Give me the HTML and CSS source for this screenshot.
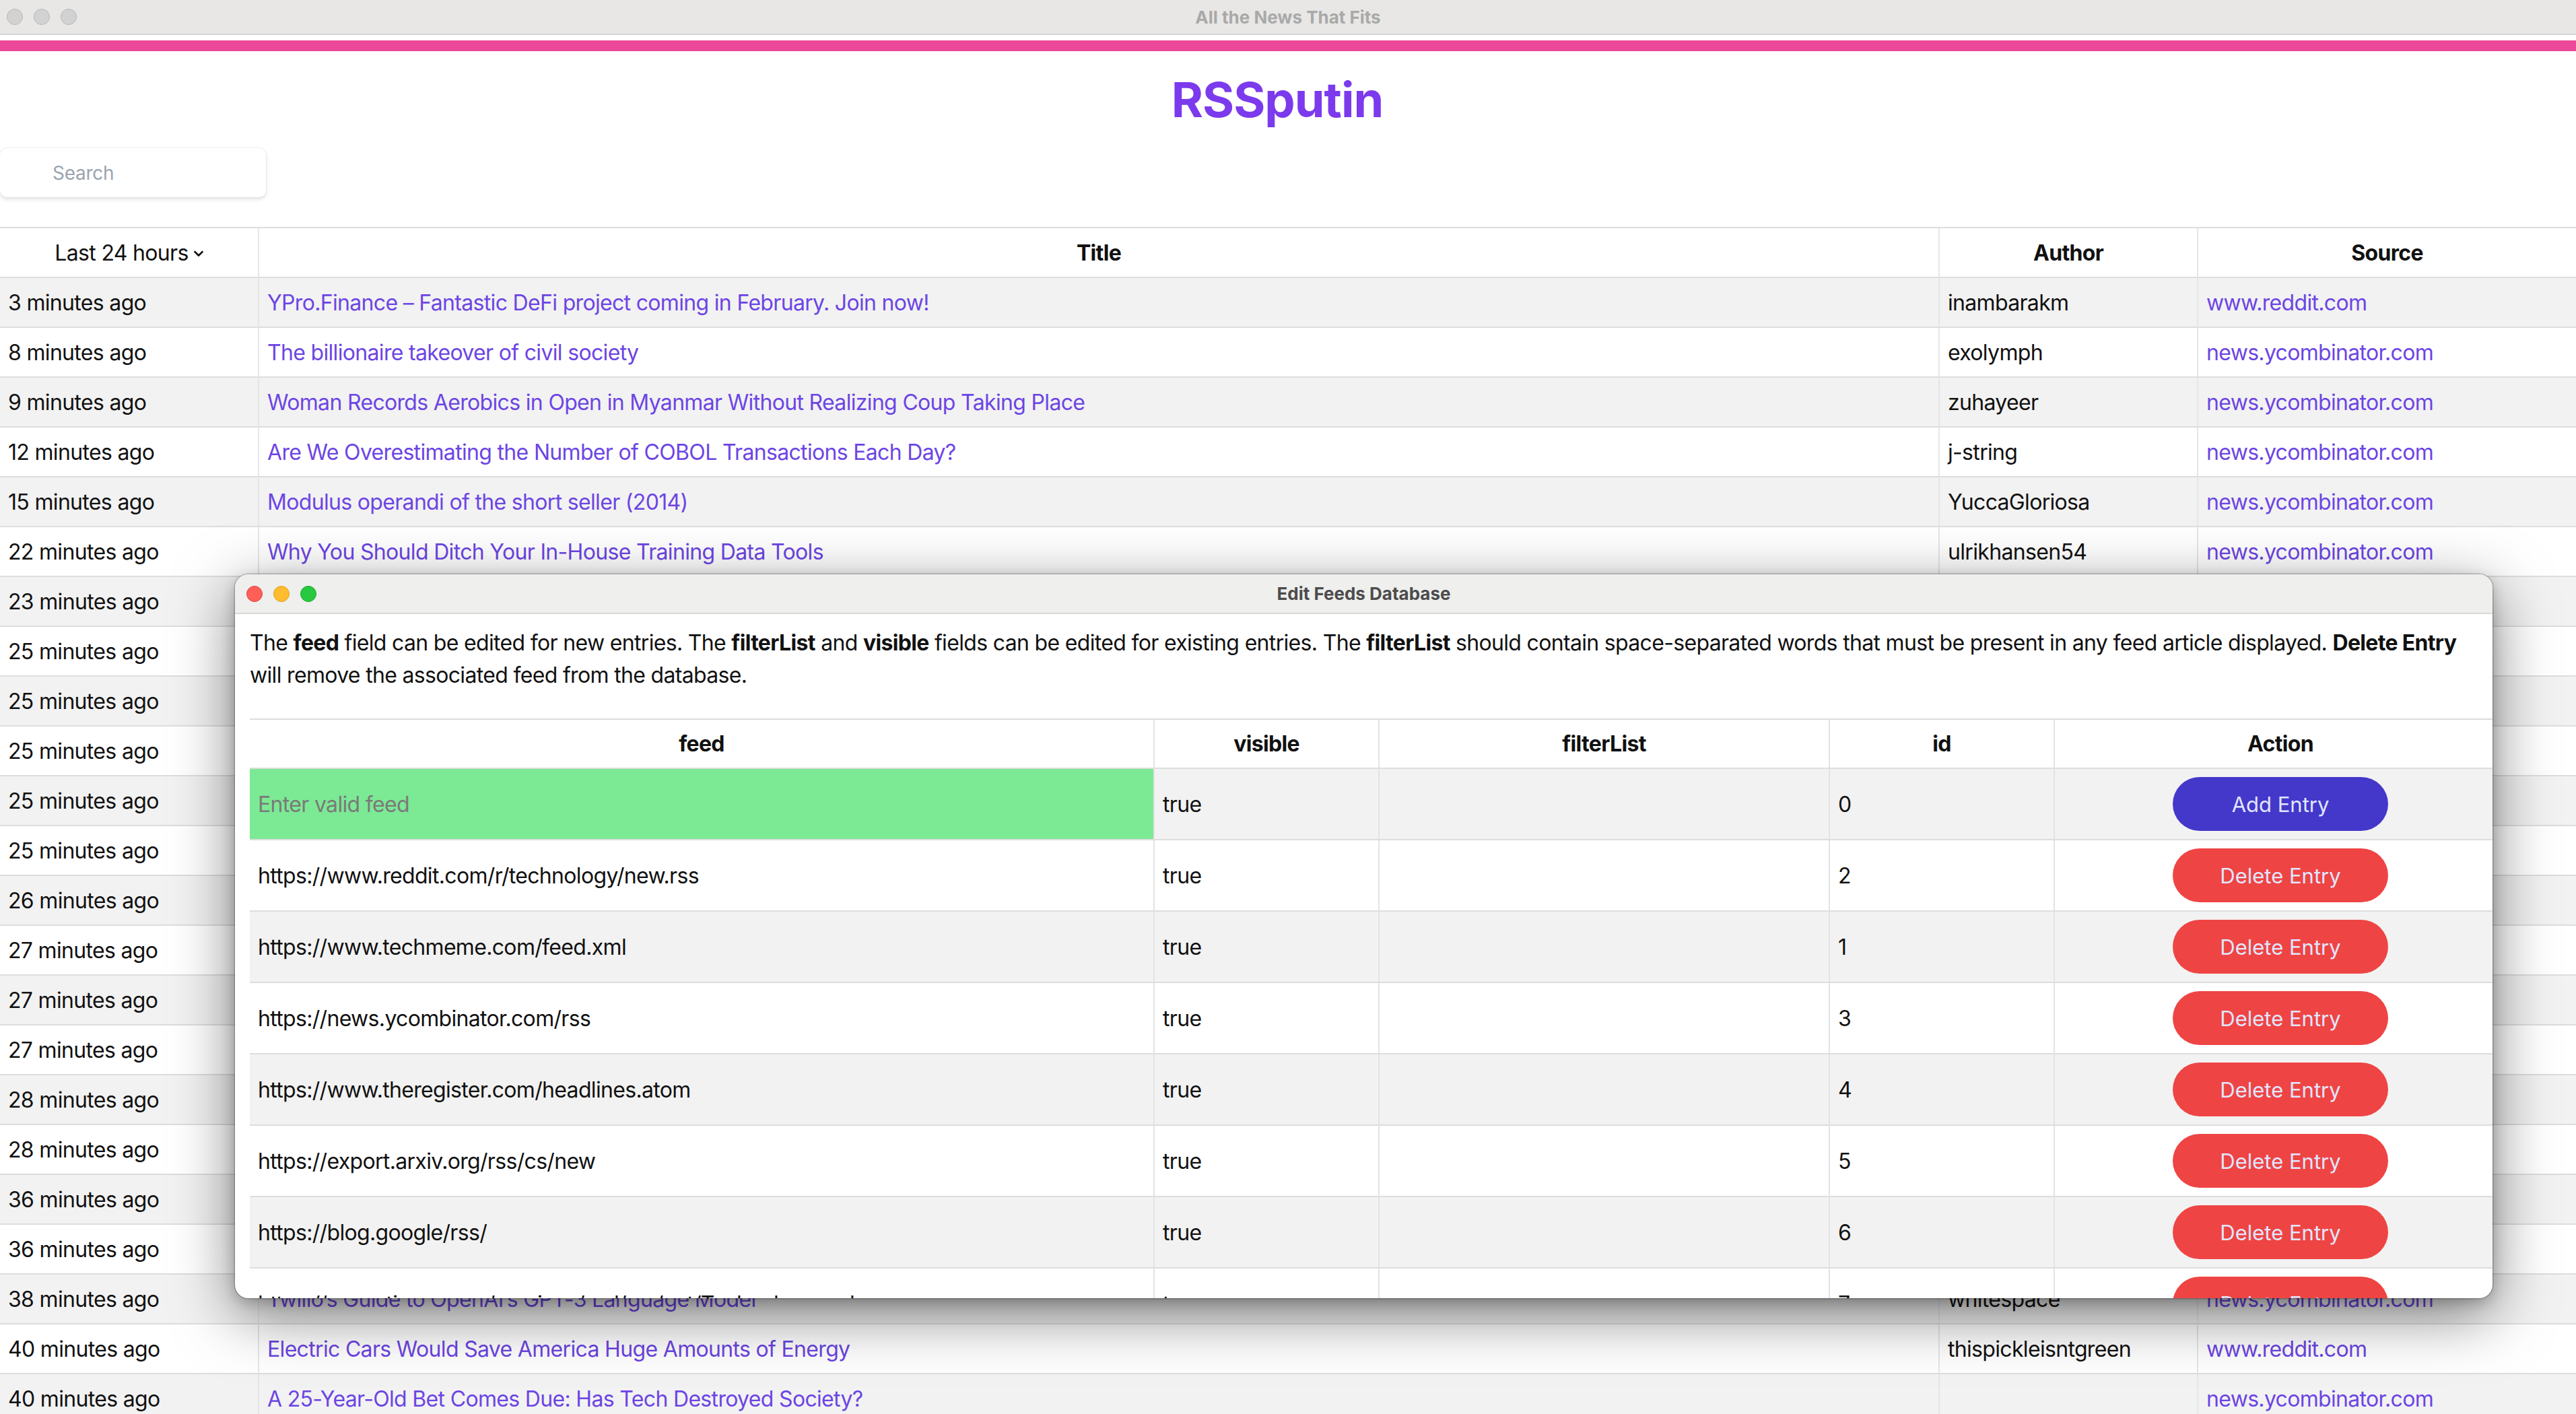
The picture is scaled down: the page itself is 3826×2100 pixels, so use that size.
FILE: index.html
```html
<!DOCTYPE html>
<html lang="en">
<head>
<meta charset="utf-8">
<title>All the News That Fits</title>
<link rel="stylesheet" href="styles.css">
</head>
<body>
<div class="window">
  <div class="titlebar">
    <div class="lights">
      <span class="light"></span><span class="light"></span><span class="light"></span>
    </div>
    <div class="app-title">All the News That Fits</div>
    <div></div>
  </div>
  <div class="accent"></div>
  <header class="brand"><h1>RSSputin</h1></header>
  <div class="search">Search</div>
  <table class="news">
    <colgroup><col class="c-time"><col class="c-title"><col class="c-author"><col class="c-source"></colgroup>
    <thead>
      <tr class="head">
        <th><span class="select">Last 24 hours <svg class="chev" viewBox="0 0 14 10" width="14" height="10"><path d="M1.5 2 L7 7.5 L12.5 2" fill="none" stroke="#111" stroke-width="2.6" stroke-linecap="round" stroke-linejoin="round"/></svg></span></th>
        <th class="b">Title</th>
        <th class="b">Author</th>
        <th class="b">Source</th>
      </tr>
    </thead>
    <tbody>
      <tr><td>3 minutes ago</td><td><a>YPro.Finance – Fantastic DeFi project coming in February. Join now!</a></td><td>inambarakm</td><td><a>www.reddit.com</a></td></tr>
      <tr><td>8 minutes ago</td><td><a>The billionaire takeover of civil society</a></td><td>exolymph</td><td><a>news.ycombinator.com</a></td></tr>
      <tr><td>9 minutes ago</td><td><a>Woman Records Aerobics in Open in Myanmar Without Realizing Coup Taking Place</a></td><td>zuhayeer</td><td><a>news.ycombinator.com</a></td></tr>
      <tr><td>12 minutes ago</td><td><a>Are We Overestimating the Number of COBOL Transactions Each Day?</a></td><td>j-string</td><td><a>news.ycombinator.com</a></td></tr>
      <tr><td>15 minutes ago</td><td><a>Modulus operandi of the short seller (2014)</a></td><td>YuccaGloriosa</td><td><a>news.ycombinator.com</a></td></tr>
      <tr><td>22 minutes ago</td><td><a>Why You Should Ditch Your In-House Training Data Tools</a></td><td>ulrikhansen54</td><td><a>news.ycombinator.com</a></td></tr>
      <tr><td>23 minutes ago</td><td></td><td></td><td></td></tr>
      <tr><td>25 minutes ago</td><td></td><td></td><td></td></tr>
      <tr><td>25 minutes ago</td><td></td><td></td><td></td></tr>
      <tr><td>25 minutes ago</td><td></td><td></td><td></td></tr>
      <tr><td>25 minutes ago</td><td></td><td></td><td></td></tr>
      <tr><td>25 minutes ago</td><td></td><td></td><td></td></tr>
      <tr><td>26 minutes ago</td><td></td><td></td><td></td></tr>
      <tr><td>27 minutes ago</td><td></td><td></td><td></td></tr>
      <tr><td>27 minutes ago</td><td></td><td></td><td></td></tr>
      <tr><td>27 minutes ago</td><td></td><td></td><td></td></tr>
      <tr><td>28 minutes ago</td><td></td><td></td><td></td></tr>
      <tr><td>28 minutes ago</td><td></td><td></td><td></td></tr>
      <tr><td>36 minutes ago</td><td></td><td></td><td></td></tr>
      <tr><td>36 minutes ago</td><td></td><td></td><td></td></tr>
      <tr><td>38 minutes ago</td><td><a>Twilio’s Guide to OpenAI’s GPT-3 Language Model</a></td><td>whitespace</td><td><a>news.ycombinator.com</a></td></tr>
      <tr><td>40 minutes ago</td><td><a>Electric Cars Would Save America Huge Amounts of Energy</a></td><td>thispickleisntgreen</td><td><a>www.reddit.com</a></td></tr>
      <tr><td>40 minutes ago</td><td><a>A 25-Year-Old Bet Comes Due: Has Tech Destroyed Society?</a></td><td></td><td><a>news.ycombinator.com</a></td></tr>
    </tbody>
  </table>
</div>

<div class="modal">
  <div class="modal-bar">
    <div class="mlights">
      <span class="ml red"></span><span class="ml yellow"></span><span class="ml green"></span>
    </div>
    <div class="modal-title">Edit Feeds Database</div>
    <div></div>
  </div>
  <div class="modal-body">
    <p class="desc">The <b>feed</b> field can be edited for new entries. The <b>filterList</b> and <b>visible</b> fields can be edited for existing entries. The <b>filterList</b> should contain space-separated words that must be present in any feed article displayed. <b>Delete Entry</b><br>will remove the associated feed from the database.</p>
    <table class="feeds">
      <colgroup><col class="f-feed"><col class="f-vis"><col class="f-filter"><col class="f-id"><col class="f-act"></colgroup>
      <thead>
        <tr class="head"><th>feed</th><th>visible</th><th>filterList</th><th>id</th><th>Action</th></tr>
      </thead>
      <tbody>
        <tr><td class="newfeed"><span class="ph">Enter valid feed</span></td><td>true</td><td></td><td>0</td><td class="act"><button class="btn add">Add Entry</button></td></tr>
        <tr><td>https://www.reddit.com/r/technology/new.rss</td><td>true</td><td></td><td>2</td><td class="act"><button class="btn del">Delete Entry</button></td></tr>
        <tr><td>https://www.techmeme.com/feed.xml</td><td>true</td><td></td><td>1</td><td class="act"><button class="btn del">Delete Entry</button></td></tr>
        <tr><td>https://news.ycombinator.com/rss</td><td>true</td><td></td><td>3</td><td class="act"><button class="btn del">Delete Entry</button></td></tr>
        <tr><td>https://www.theregister.com/headlines.atom</td><td>true</td><td></td><td>4</td><td class="act"><button class="btn del">Delete Entry</button></td></tr>
        <tr><td>https://export.arxiv.org/rss/cs/new</td><td>true</td><td></td><td>5</td><td class="act"><button class="btn del">Delete Entry</button></td></tr>
        <tr><td>https://blog.google/rss/</td><td>true</td><td></td><td>6</td><td class="act"><button class="btn del">Delete Entry</button></td></tr>
        <tr><td>https://rss.nytimes.com/services/xml/rss/nyt/Technology.xml</td><td>true</td><td></td><td>7</td><td class="act"><button class="btn del">Delete Entry</button></td></tr>
      </tbody>
    </table>
  </div>
</div>
</body>
</html>
```

FILE: styles.css
```css
html, body {
  margin: 0;
  padding: 0;
}
body {
  width: 3826px;
  height: 2100px;
  overflow: hidden;
  position: relative;
  background: #ffffff;
  font-family: Inter, "Noto Sans", "Liberation Sans", sans-serif;
  font-size: 32px;
  letter-spacing: -0.021em;
  color: #111111;
}

/* ---------- window chrome ---------- */
.titlebar {
  height: 52px;
  box-sizing: border-box;
  background: #e8e7e5;
  border-bottom: 2px solid #d3d3d3;
  display: grid;
  grid-template-columns: 1fr auto 1fr;
  align-items: center;
}
.lights {
  display: flex;
  gap: 16px;
  padding-left: 10px;
}
.light {
  width: 24px;
  height: 24px;
  border-radius: 50%;
  box-sizing: border-box;
  background: #d2d2d2;
  border: 1.5px solid #b7b7b7;
}
.app-title {
  font-size: 26px;
  font-weight: 700;
  letter-spacing: 0;
  color: #a9a9a9;
}
.accent {
  margin-top: 8px;
  height: 16px;
  background: #ec4899;
}

/* ---------- header ---------- */
.brand {
  padding-right: 32px;
  text-align: center;
}
.brand h1 {
  margin: 36px 0 0;
  font-size: 72px;
  line-height: 72px;
  font-weight: 700;
  color: #7c3aed;
  letter-spacing: -1px;
}
.search {
  margin-top: 36px;
  width: 395px;
  height: 73px;
  box-sizing: border-box;
  border-radius: 10px;
  background: #fff;
  box-shadow: 0 3px 6px rgba(0, 0, 0, 0.12), 0 0 0 1px rgba(0, 0, 0, 0.04);
  display: flex;
  align-items: center;
  padding-left: 78px;
  font-size: 28px;
  letter-spacing: -0.01em;
  color: #9ca3af;
}

/* ---------- news table ---------- */
.news {
  margin-top: 44px;
  width: 3826px;
  table-layout: fixed;
  border-collapse: separate;
  border-spacing: 0;
}
.c-time { width: 383px; }
.c-title { width: 2496px; }
.c-author { width: 384px; }
.c-source { width: 563px; }

.news th,
.news td {
  padding: 0 12px;
  text-align: left;
  white-space: nowrap;
  overflow: hidden;
  border-bottom: 2px solid #dddddd;
  vertical-align: middle;
}
.news th + th,
.news td + td {
  border-left: 2px solid #e6e6e6;
}
.news tr { height: 74px; }
.news tr.head { height: 76px; }
.news th {
  border-top: 2px solid #dddddd;
  text-align: center;
  font-weight: 400;
}
.news th.b { font-weight: 700; }
.news tbody tr:nth-child(odd) { background: #f2f2f2; }
a { color: #6c45e4; text-decoration: none; }

.select {
  display: inline-flex;
  align-items: center;
  gap: 8px;
}
.chev { display: block; margin-top: 4px; }

/* ---------- modal window ---------- */
.modal {
  position: absolute;
  left: 349px;
  top: 853px;
  width: 3353px;
  height: 1075px;
  border-radius: 20px;
  overflow: hidden;
  background: #ffffff;
  box-shadow: 0 0 0 1.5px rgba(0, 0, 0, 0.2), 0 24px 90px rgba(0, 0, 0, 0.5), 0 6px 20px rgba(0, 0, 0, 0.2);
}
.modal-bar {
  height: 59px;
  box-sizing: border-box;
  background: #efefee;
  border-bottom: 2px solid #d9d9d9;
  display: grid;
  grid-template-columns: 1fr auto 1fr;
  align-items: center;
}
.mlights {
  display: flex;
  gap: 16px;
  padding-left: 17px;
}
.ml {
  width: 24px;
  height: 24px;
  border-radius: 50%;
  box-sizing: border-box;
}
.ml.red { background: #ff5f57; border: 1px solid #e0443e; }
.ml.yellow { background: #febc2e; border: 1px solid #dea123; }
.ml.green { background: #28c840; border: 1px solid #1aab29; }
.modal-title {
  font-size: 26px;
  font-weight: 700;
  letter-spacing: 0;
  color: #4c4c4c;
}
.modal-body {
  padding: 19px 0 0 22px;
}
.desc {
  margin: 0 0 40px;
  width: 3320px;
  line-height: 48px;
  white-space: nowrap;
}
.desc b { font-weight: 700; }

.feeds {
  width: 3351px;
  table-layout: fixed;
  border-collapse: separate;
  border-spacing: 0;
}
.f-feed { width: 1342px; }
.f-vis { width: 334px; }
.f-filter { width: 669px; }
.f-id { width: 334px; }
.f-act { width: 672px; }

.feeds th,
.feeds td {
  padding: 0 12px;
  text-align: left;
  white-space: nowrap;
  overflow: hidden;
  border-bottom: 2px solid #dddddd;
  vertical-align: middle;
}
.feeds th + th,
.feeds td + td {
  border-left: 2px solid #e3e3e3;
}
.feeds tr { height: 106px; }
.feeds tr.head { height: 75px; }
.feeds th {
  border-top: 2px solid #dddddd;
  text-align: center;
  font-weight: 700;
}
.feeds tbody tr:nth-child(odd) { background: #f2f2f2; }
.feeds td.newfeed { background: #7ce994; }
.ph { color: #7a7a7a; }
.feeds td.act { text-align: center; }

.btn {
  width: 320px;
  height: 80px;
  border: none;
  border-radius: 40px;
  font-family: inherit;
  font-size: 31px;
  letter-spacing: 0;
  color: #e0e7ff;
  cursor: pointer;
}
.btn.add { background: #4438ca; }
.btn.del { background: #ef4444; }
```
